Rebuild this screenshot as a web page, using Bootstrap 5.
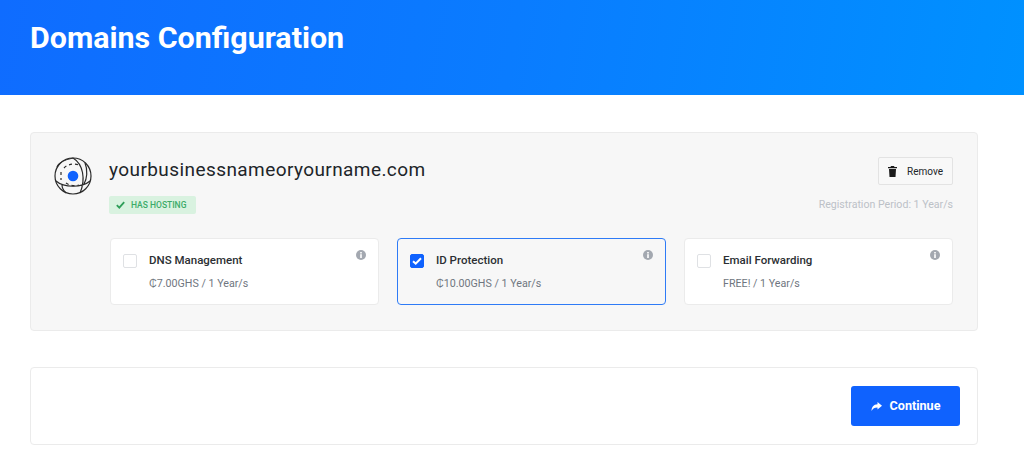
<!DOCTYPE html>
<html lang="en"><head><meta charset="utf-8"><title>Domains Configuration</title>
<link href="https://cdn.jsdelivr.net/npm/bootstrap@5.3.0/dist/css/bootstrap.min.css" rel="stylesheet">
<style>
html,body{height:476px;overflow:hidden}
body{font-family:Roboto,"Liberation Sans",sans-serif;background:#fff;color:#212529}
.hero-band{height:95px;background:linear-gradient(100deg,#0f6cff 0%,#0a7cff 50%,#0091ff 100%);padding:21px 30px 0}
.hero-band h1{font-size:30.4px;line-height:34px;font-weight:700;color:#fff;margin:0}
.page-main{padding:37px 46px 0 30px}
.domain-panel{background:#f7f7f7;border:1px solid #ebebeb;border-radius:4px;height:199px;padding:24px 24px 0 23px}
.globe-wrap{width:38px;height:38px;flex:none;margin-right:17px}
.domain-name{font-size:19px;line-height:26px;letter-spacing:.42px;font-weight:400;color:#212529;margin:0}
.host-tag{display:inline-flex;align-items:center;height:18px;padding:0 10px 0 7px;margin-top:13px;background:#d9f2e0;color:#3cab69;border-radius:2px;font-size:8.5px;font-weight:500;line-height:18px}
.host-tag svg{margin-right:6px}
.remove-btn{width:75px;height:28px;padding:0;font-size:10px;font-weight:400;background:#f8f8f8;border:1px solid #e3e3e3;border-radius:2px;color:#212529;display:flex;align-items:center;justify-content:center;gap:10px}
.reg-period{font-size:10.6px;color:#bcc1c7;margin-top:13px;line-height:14px}
.addon-grid{display:grid;grid-template-columns:269px 269px 269px;column-gap:18px;margin:22px 0 0 56px}
.addon-box{position:relative;height:67px;background:#fff;border:1px solid #ebebeb;border-radius:4px;display:flex;padding:14px 12px}
.addon-box.is-on{background:#f7f7f7;border-color:#2e7bf6}
.tick-box{width:14px;height:14px;flex:none;margin-top:1px;margin-right:12px;background:#fff;border:1px solid #dfe1e4;border-radius:2px}
.tick-box.is-on{background:#0f62fe;border-color:#0f62fe;display:flex;align-items:center;justify-content:center}
.addon-title{font-size:11.5px;line-height:14px;font-weight:500;color:#2b2f33}
.addon-price{font-size:10.7px;line-height:14px;color:#6f7680;margin-top:10px}
.info-dot{position:absolute;top:11px;right:12px;width:10px;height:10px}
.foot-box{height:78px;margin-top:36px;border:1px solid #ebebeb;border-radius:4px;padding:18px 17px 0 0;display:flex;justify-content:flex-end}
.go-btn{width:109px;height:40px;padding:0;background:#0f62fe;border:0;border-radius:3px;color:#fff;font-size:12.6px;font-weight:700;display:flex;align-items:center;justify-content:center;gap:8px}
</style></head>
<body>
<header class="hero-band"><h1>Domains Configuration</h1></header>
<main class="page-main">
<section class="domain-panel">
<div class="d-flex">
<div class="globe-wrap">
<svg width="38" height="38" viewBox="0 0 38 38" fill="none" stroke="#2b2b2b" stroke-width="1.200"><circle cx="19" cy="19" r="18"/><path d="M19 1C9 3 4 7 3 10M19 1C29 7 32 22 26 36M2 24C10 31 28 31 36 24M31 6C34 13 33 22 30 27M12 36C9 33 8 31 8 28"/><path d="M10 11C14 7 20 6 25 8M7 15V23M12 26C16 29 21 29 25 28" stroke-dasharray="3 3"/><circle cx="19" cy="19" r="5.300" fill="#0f62fe" stroke="none"/></svg>
</div>
<div class="flex-grow-1">
<h2 class="domain-name">yourbusinessnameoryourname.com</h2>
<span class="host-tag"><svg width="9" height="8" viewBox="0 0 9 8" fill="none" stroke="#2f9e59" stroke-width="1.800"><path d="M.8 4.200 3.300 6.600 8.200 1.200"/></svg>HAS HOSTING</span>
</div>
<div class="d-flex flex-column align-items-end">
<button type="button" class="btn remove-btn"><svg width="9" height="11" viewBox="0 0 9 11" fill="#1a1a1a"><path d="M3 0h3l.5 1H9v1.200H0V1h2.500zM1 3h7l-.5 8h-6z"/></svg>Remove</button>
<div class="reg-period">Registration Period: 1 Year/s</div>
</div>
</div>
<div class="addon-grid">
<div class="addon-box"><span class="tick-box"></span><div><div class="addon-title">DNS Management</div><div class="addon-price">₵7.00GHS / 1 Year/s</div></div><svg class="info-dot" viewBox="0 0 10 10"><circle cx="5" cy="5" r="5" fill="#a3a8b0"/><rect x="4.200" y="4.200" width="1.600" height="3.800" fill="#fff"/><rect x="4.200" y="2" width="1.600" height="1.500" fill="#fff"/></svg></div>
<div class="addon-box is-on"><span class="tick-box is-on"><svg width="10" height="8" viewBox="0 0 10 8" fill="none" stroke="#fff" stroke-width="2"><path d="M1 4.200 3.700 6.600 9 1.200"/></svg></span><div><div class="addon-title">ID Protection</div><div class="addon-price">₵10.00GHS / 1 Year/s</div></div><svg class="info-dot" viewBox="0 0 10 10"><circle cx="5" cy="5" r="5" fill="#a3a8b0"/><rect x="4.200" y="4.200" width="1.600" height="3.800" fill="#fff"/><rect x="4.200" y="2" width="1.600" height="1.500" fill="#fff"/></svg></div>
<div class="addon-box"><span class="tick-box"></span><div><div class="addon-title">Email Forwarding</div><div class="addon-price">FREE! / 1 Year/s</div></div><svg class="info-dot" viewBox="0 0 10 10"><circle cx="5" cy="5" r="5" fill="#a3a8b0"/><rect x="4.200" y="4.200" width="1.600" height="3.800" fill="#fff"/><rect x="4.200" y="2" width="1.600" height="1.500" fill="#fff"/></svg></div>
</div>
</section>
<section class="foot-box">
<button type="button" class="btn go-btn"><svg width="11" height="9" viewBox="0 0 11 9" fill="#fff"><path d="M6.500 0 11 3.800 6.500 7.600V5.400C3.500 5.400 1.800 6.300.5 9 .5 5 2.500 2.300 6.500 2.200z"/></svg>Continue</button>
</section>
</main>
<script src="https://cdn.jsdelivr.net/npm/bootstrap@5.3.0/dist/js/bootstrap.bundle.min.js"></script>
</body></html>
